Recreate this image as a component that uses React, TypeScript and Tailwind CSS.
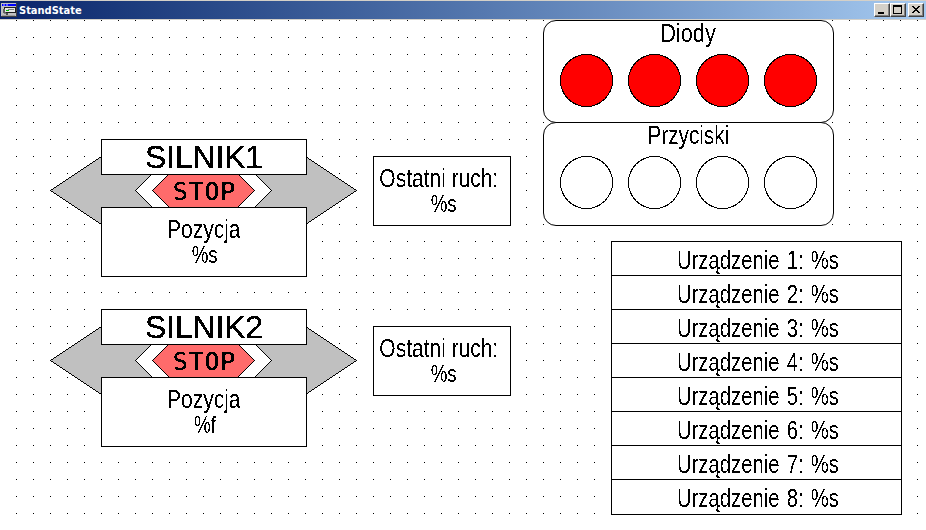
import type { ReactNode } from 'react';

function Text({ children, className }: { children: ReactNode; className: string }) {
  return <span className={`block whitespace-pre [filter:url(#crisp)] ${className}`}>{children}</span>;
}

function AppIcon() {
  return (
    <svg width="16" height="14" viewBox="0 0 16 14" shapeRendering="crispEdges" className="shrink-0">
      <rect width="16" height="14" fill="#404040" />
      <rect width="15" height="13" fill="#c0c0c0" />
      <rect x="1" y="1" width="14" height="2" fill="#0000ff" />
      <rect x="2" y="1" width="2" height="2" fill="#6060ff" />
      <rect x="5" y="1" width="2" height="2" fill="#6060ff" />
      <rect x="3" y="4" width="12" height="6" fill="#202020" />
      <rect x="2" y="6" width="3" height="4" fill="#606060" />
      <rect x="4" y="5" width="10" height="4" fill="#e8e8e8" />
      <rect x="7" y="6" width="6" height="1" fill="#808080" />
      <rect x="5" y="7" width="3" height="1" fill="#00c000" />
      <rect x="3" y="10" width="4" height="1" fill="#808080" />
      <rect x="5" y="10" width="2" height="2" fill="#505050" />
      <rect x="1" y="12" width="13" height="1" fill="#a0a0a0" />
    </svg>
  );
}

function WinButton({ children }: { children: ReactNode }) {
  return (
    <div className="h-[14px] w-4 border border-t-white border-l-white border-r-[#404040] border-b-[#404040] bg-[#d4d0c8] shadow-[inset_-1px_-1px_0_#808080]">
      <svg width="14" height="12" viewBox="0 0 14 12" shapeRendering="crispEdges" className="block">
        {children}
      </svg>
    </div>
  );
}

function TitleBar() {
  return (
    <header className="flex h-5 items-center border-y border-[#d4d0c8] bg-linear-to-r from-[#0a246a] to-[#a6caf0] pb-px pl-px pr-[2px]">
      <AppIcon />
      <span className="ml-[2px] origin-left translate-y-px scale-x-90 font-['DejaVu_Sans',sans-serif] text-[11px] leading-4 font-bold text-white">
        StandState
      </span>
      <div className="ml-auto flex">
        <WinButton>
          <rect x="3" y="8" width="6" height="2" fill="#000" />
        </WinButton>
        <WinButton>
          <path d="M2 1h9v9H2zM3 3v6h7V3z" fill="#000" fillRule="evenodd" />
        </WinButton>
        <div className="ml-[2px]">
          <WinButton>
            <path
              d="M3 2h2v1h1v1h2V3h1V2h2v1h-1v1H9v1H8v1h1v1h1v1h1v1H9V8H8V7H6v1H5v1H3V8h1V7h1V6h1V5H5V4H4V3H3z"
              fill="#000"
            />
          </WinButton>
        </div>
      </div>
    </header>
  );
}

const small = "font-['Liberation_Sans',Arial,sans-serif] text-[25px] leading-[25px]";
const format = "font-['Liberation_Sans',Arial,sans-serif] text-[24px] leading-[25px] ml-[3px] scale-x-[.78]";

function Motor({ name, value, place }: { name: string; value: string; place: string }) {
  return (
    <section className={`absolute left-[50px] h-[138px] w-[307px] ${place}`}>
      <svg
        width="307"
        height="138"
        viewBox="0 0 307 138"
        shapeRendering="crispEdges"
        className="absolute inset-0"
        stroke="#000"
        strokeWidth="1"
      >
        <path d="M.5 51.5 51.5 17.5H255.5L306.5 51.5 255.5 85.5H51.5z" fill="#c0c0c0" />
        <path d="M85.5 51.5 102.5 34.5H204.5L221.5 51.5 204.5 68.5H102.5z" fill="#fff" />
        <path d="M102.5 51.5 119.5 34.5H187.5L204.5 51.5 187.5 68.5H119.5z" fill="#ff6b6b" />
      </svg>
      <div className="relative mx-auto flex w-[206px] flex-col">
        <div className="flex h-9 items-center justify-center border border-black bg-white">
          <Text className="ml-px font-['Liberation_Sans',Arial,sans-serif] text-[32px] leading-[34px] tracking-[-0.2px] [-webkit-text-stroke:0.3px_black]">
            {name}
          </Text>
        </div>
        <div className="flex h-8 items-center justify-center">
          <Text className="ml-[2px] translate-y-px font-['DejaVu_Sans_Mono',monospace] text-[25px] leading-8 tracking-[0.8px] [-webkit-text-stroke:0.25px_black]">
            STOP
          </Text>
        </div>
        <div className="flex h-[70px] flex-col items-center border border-black bg-white pt-[9px]">
          <Text className={`${small} scale-x-[.84]`}>Pozycja</Text>
          <Text className={format}>{value}</Text>
        </div>
      </div>
    </section>
  );
}

function LastMove({ place }: { place: string }) {
  return (
    <section
      className={`absolute left-[373px] flex h-[70px] w-[138px] flex-col items-center border border-black bg-white pt-[9px] ${place}`}
    >
      <Text className={`${small} -ml-[6px] scale-x-[.84]`}>Ostatni ruch:</Text>
      <Text className={format}>%s</Text>
    </section>
  );
}

function LampPanel({ title, fill, place, scale }: { title: string; fill: string; place: string; scale: string }) {
  return (
    <section
      className={`absolute left-[543px] w-[291px] rounded-[13px] border border-black bg-white ${place}`}
    >
      <div className="flex justify-center">
        <Text className={`${small} ${scale}`}>{title}</Text>
      </div>
      <div className="mt-2 flex gap-[15px] pl-4">
        {[0, 1, 2, 3].map((i) => (
          <svg key={i} width="53" height="53" viewBox="0 0 53 53" shapeRendering="crispEdges">
            <circle cx="26.5" cy="26.5" r="26" fill={fill} stroke="#000" />
          </svg>
        ))}
      </div>
    </section>
  );
}

function Devices() {
  return (
    <section className="absolute top-[221px] left-[611px] w-[291px] border border-black bg-white">
      {[1, 2, 3, 4, 5, 6, 7, 8].map((n) => (
        <div
          key={n}
          className="flex h-[34px] justify-center border-b border-black pt-[6px] last:border-b-0"
        >
          <Text className={`${small} ml-[2px] scale-x-[.81] [word-spacing:2px]`}>{`Urządzenie ${n}: %s`}</Text>
        </div>
      ))}
    </section>
  );
}

export default function App() {
  return (
    <div className="flex h-[530px] w-[926px] flex-col overflow-hidden bg-white text-black">
      <svg width="0" height="0" className="absolute">
        <filter id="crisp" colorInterpolationFilters="sRGB">
          <feComponentTransfer>
            <feFuncA type="discrete" tableValues="0 1" />
          </feComponentTransfer>
        </filter>
      </svg>
      <TitleBar />
      <main className="relative flex-1 bg-[linear-gradient(to_right,#fff_16px,transparent_16px),linear-gradient(#000_1px,#fff_1px)] bg-size-[17px_17px]">
        <Motor name="SILNIK1" value="%s" place="top-[119px]" />
        <Motor name="SILNIK2" value="%f" place="top-[289px]" />
        <LastMove place="top-[136px]" />
        <LastMove place="top-[306px]" />
        <LampPanel title="Diody" fill="#ff0000" place="top-0 h-[103px]" scale="-ml-[2px] scale-x-[.87]" />
        <LampPanel title="Przyciski" fill="#ffffff" place="top-[102px] h-[104px]" scale="scale-x-[.83]" />
        <Devices />
      </main>
    </div>
  );
}
